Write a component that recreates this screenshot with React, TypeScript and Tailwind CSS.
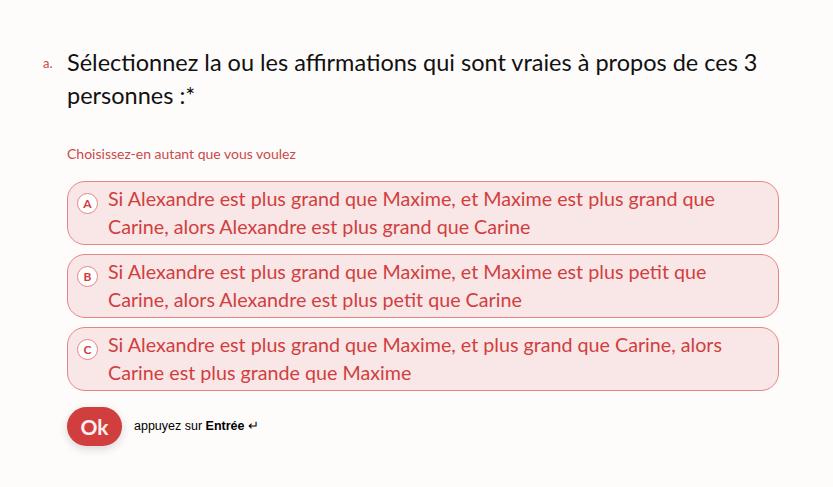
import React, { useState } from 'react';

const options = [
  { key: 'A', text: 'Si Alexandre est plus grand que Maxime, et Maxime est plus grand que Carine, alors Alexandre est plus grand que Carine' },
  { key: 'B', text: 'Si Alexandre est plus grand que Maxime, et Maxime est plus petit que Carine, alors Alexandre est plus petit que Carine' },
  { key: 'C', text: 'Si Alexandre est plus grand que Maxime, et plus grand que Carine, alors Carine est plus grande que Maxime' },
];

const App: React.FC = () => {
  const [selected, setSelected] = useState<string[]>([]);

  const toggle = (key: string) => {
    setSelected((prev) => (prev.includes(key) ? prev.filter((k) => k !== key) : [...prev, key]));
  };

  return (
    <div className="min-h-[487px] w-full bg-[#fefbfb] font-['Lato','Noto_Sans',sans-serif]">
      <div className="pt-[46px] pl-[67px] w-[779px]">
        {/* Question */}
        <div className="relative">
          <span className="absolute -left-[24px] top-[8px] text-[13px] text-[#c94a4a]">a.</span>
          <h2 className="text-[23.5px] leading-[33px] text-[#111]">
            Sélectionnez la ou les affirmations qui sont vraies à propos de ces 3 personnes :*
          </h2>
        </div>

        <p className="mt-[33px] text-[14px] leading-[18px] text-[#c94a4a]">Choisissez-en autant que vous voulez</p>

        {/* Options */}
        <div className="mt-[18px] flex flex-col gap-[9px]">
          {options.map((o) => (
            <button
              key={o.key}
              type="button"
              onClick={() => toggle(o.key)}
              className="flex items-start gap-[10px] rounded-[18px] border border-[#e58585] bg-[#f9e6e6] pl-[9px] pr-4 py-[3px] text-left"
            >
              <span className="mt-[8px] flex h-[21px] w-[21px] shrink-0 items-center justify-center rounded-full border border-[#e58585] bg-white text-[12px] font-bold text-[#d23c3c]">
                {o.key}
              </span>
              <span className="text-[19.7px] leading-[28px] text-[#d03f3f]">{o.text}</span>
            </button>
          ))}
        </div>

        {/* Submit */}
        <div className="mt-[16px] flex items-center gap-[12px]">
          <button
            type="button"
            className="h-[39px] w-[55px] rounded-full bg-[#d03e3e] text-[21px] font-bold text-[#fbeeee] shadow-[0_3px_10px_rgba(0,0,0,0.15)]"
          >
            Ok
          </button>
          <span className="font-['Liberation_Sans',Arial,sans-serif] text-[12.5px] text-black">
            appuyez sur <span className="font-bold">Entrée</span> ↵
          </span>
        </div>
      </div>
    </div>
  );
};

export default App;
